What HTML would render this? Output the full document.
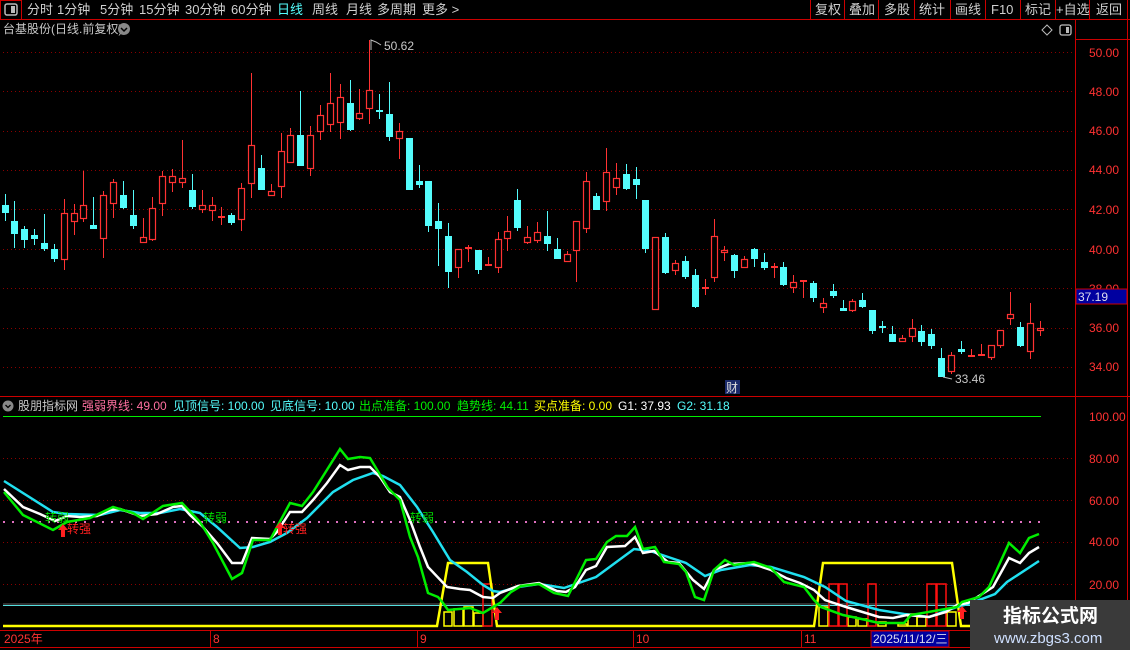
<!DOCTYPE html>
<html><head><meta charset="utf-8">
<style>
html,body{margin:0;padding:0;background:#000;width:1130px;height:650px;overflow:hidden;font-family:"Liberation Sans","Noto Sans CJK SC",sans-serif;}
svg{position:absolute;left:0;top:0}
text{font-family:"Liberation Sans","Noto Sans CJK SC",sans-serif}
</style></head><body>
<svg id="s" width="1130" height="650" viewBox="0 0 1130 650" xmlns="http://www.w3.org/2000/svg">
<rect width="1130" height="650" fill="#000"/>
<rect x="0.5" y="0.5" width="21" height="19" fill="none" stroke="#c00" />
<rect x="5" y="4" width="12" height="11" rx="2" fill="none" stroke="#bbb" stroke-width="1.5"/>
<rect x="11" y="6" width="4" height="7" fill="#bbb"/>
<line x1="0" y1="19.5" x2="1130" y2="19.5" stroke="#c00"/>
<g font-size="13" fill="#d0d0d0">
<text x="27" y="14">分时</text><text x="57" y="14">1分钟</text><text x="100" y="14">5分钟</text>
<text x="139" y="14">15分钟</text><text x="185" y="14">30分钟</text><text x="231" y="14">60分钟</text>
<text x="277" y="14" fill="#54fcfc">日线</text><text x="312" y="14">周线</text><text x="346" y="14">月线</text>
<text x="377" y="14">多周期</text><text x="422" y="14">更多 &gt;</text>
</g>
<g stroke="#c00" fill="none">
<line x1="810.5" y1="0" x2="810.5" y2="19"/><line x1="844.5" y1="0" x2="844.5" y2="19"/>
<line x1="878.5" y1="0" x2="878.5" y2="19"/><line x1="914.5" y1="0" x2="914.5" y2="19"/>
<line x1="950.5" y1="0" x2="950.5" y2="19"/><line x1="985.5" y1="0" x2="985.5" y2="19"/>
<line x1="1020.5" y1="0" x2="1020.5" y2="19"/><line x1="1055.5" y1="0" x2="1055.5" y2="19"/>
<line x1="1089.5" y1="0" x2="1089.5" y2="19"/><line x1="1127.5" y1="0" x2="1127.5" y2="19"/>
</g>
<g font-size="13" fill="#d0d0d0">
<text x="815" y="14">复权</text><text x="849" y="14">叠加</text><text x="884" y="14">多股</text>
<text x="919" y="14">统计</text><text x="955" y="14">画线</text><text x="991" y="14">F10</text>
<text x="1025" y="14">标记</text><text x="1056" y="14">+自选</text><text x="1096" y="14">返回</text>
</g>
<text x="3" y="33" font-size="12" fill="#c8c8c8">台基股份(日线.前复权)</text>
<circle cx="124" cy="29" r="6" fill="#888"/>
<path d="M121 28 L124 31 L127 28" stroke="#000" stroke-width="1.5" fill="none"/>
<path d="M1047 25 L1052 30 L1047 35 L1042 30 Z" stroke="#bbb" fill="none"/>
<rect x="1060" y="25" width="11" height="10" rx="2" fill="none" stroke="#bbb" stroke-width="1.3"/>
<rect x="1066" y="27" width="3" height="6" fill="#bbb"/>
<line x1="1075.5" y1="20" x2="1075.5" y2="650" stroke="#c00"/>
<line x1="1127.5" y1="20" x2="1127.5" y2="650" stroke="#c00"/>
<line x1="1075" y1="39.5" x2="1130" y2="39.5" stroke="#c00"/>
<line x1="0" y1="396.5" x2="1130" y2="396.5" stroke="#c00"/>
<line x1="0" y1="630.5" x2="1075" y2="630.5" stroke="#c00"/>
<line x1="0" y1="647.5" x2="1075" y2="647.5" stroke="#c00"/>
<g id="grid" stroke="#8a0000" stroke-dasharray="1 3"></g>
<g font-size="12" fill="#ff3232">
<text x="1089" y="57">50.00</text><text x="1089" y="96">48.00</text><text x="1089" y="135">46.00</text>
<text x="1089" y="174">44.00</text><text x="1089" y="214">42.00</text><text x="1089" y="254">40.00</text>
<text x="1089" y="293">38.00</text><text x="1089" y="332">36.00</text><text x="1089" y="371">34.00</text>
<text x="1089" y="421">100.00</text><text x="1089" y="463">80.00</text><text x="1089" y="505">60.00</text>
<text x="1089" y="546">40.00</text><text x="1089" y="589">20.00</text>
</g>
<rect x="1076" y="289" width="51" height="15" fill="#0000a0" stroke="#c00"/>
<text x="1078" y="301" font-size="12" fill="#dde">37.19</text>
<g id="candles"></g>
<path d="M371 50 L371 40 L376 42 L381 45" stroke="#bbb" fill="none"/>
<text x="384" y="50" font-size="12" fill="#c8c8c8">50.62</text>
<path d="M943 377 L952 379" stroke="#bbb" fill="none"/>
<text x="955" y="383" font-size="12" fill="#c8c8c8">33.46</text>
<rect x="725" y="380" width="15" height="14" fill="#1a2a6a"/>
<text x="726" y="392" font-size="12" fill="#ddd">财</text>
<circle cx="8" cy="406" r="5.5" fill="#888"/>
<path d="M5.5 405 L8 407.5 L10.5 405" stroke="#000" stroke-width="1.3" fill="none"/>
<g font-size="12">
<text x="18" y="410" fill="#c8c8c8">股朋指标网</text>
<text x="82" y="410" fill="#ff70a0">强弱界线: 49.00</text>
<text x="173" y="410" fill="#54fcfc">见顶信号: 100.00</text>
<text x="270" y="410" fill="#54fcfc">见底信号: 10.00</text>
<text x="359" y="410" fill="#00ee00">出点准备: 100.00</text>
<text x="457" y="410" fill="#00ee00">趋势线: 44.11</text>
<text x="534" y="410" fill="#ffff00">买点准备: 0.00</text>
<text x="618" y="410" fill="#fff">G1: 37.93</text>
<text x="677" y="410" fill="#54fcfc">G2: 31.18</text>
</g>
<line x1="3" y1="416.5" x2="1041" y2="416.5" stroke="#00ee00"/>
<line x1="3" y1="522" x2="1041" y2="522" stroke="#e070c0" stroke-width="2" stroke-dasharray="2 7"/>
<line x1="3" y1="605.5" x2="1075" y2="605.5" stroke="#54e0e0"/>
<line x1="3" y1="604" x2="1075" y2="604" stroke="#bbb" stroke-width="0.6"/>
<g fill="none" stroke-width="1.5">
<g stroke="#ffff00">
<rect x="444" y="612" width="8" height="14"/><rect x="454" y="609" width="9" height="17"/>
<rect x="464" y="607" width="9" height="19"/><rect x="474" y="613" width="9" height="13"/>
<rect x="819" y="607" width="9" height="19"/><rect x="848" y="617" width="8" height="9"/>
<rect x="858" y="619" width="9" height="7"/><rect x="878" y="622" width="8" height="4"/>
<rect x="898" y="624" width="9" height="2"/><rect x="908" y="614" width="9" height="12"/>
<rect x="917" y="617" width="9" height="9"/><rect x="947" y="612" width="9" height="14"/>
</g>
<g stroke="#ff1010">
<rect x="483" y="584" width="9" height="42"/><rect x="829" y="584" width="9" height="42"/>
<rect x="839" y="584" width="8" height="42"/><rect x="868" y="584" width="8" height="42"/>
<rect x="927" y="584" width="9" height="42"/><rect x="937" y="584" width="9" height="42"/>
</g>
</g>
<polyline fill="none" stroke="#ffff00" stroke-width="2.5" points="3,626 437,626 448,563 488,563 497,626 814,626 823,563 952,563 961,626 1041,626"/>
<polyline fill="none" stroke="#20e0f0" stroke-width="2.5" points="4,481 53,512 67,514 100,515 120,510 140,513 160,513 180,509 200,513 217,527 240,548 253,547 270,542 287,533 307,518 333,492 353,480 373,473 383,476 400,485 417,507 433,532 450,560 467,572 483,585 493,591 500,592 518,587 539,584 564,588 596,577 634,549 650,551 686,563 705,576 721,570 750,565 771,567 804,577 825,587 846,601 879,610 904,614 929,617 957,607 971,603 995,594 1007,582 1039,561"/>
<polyline fill="none" stroke="#ffffff" stroke-width="2.5" points="4,489 23,507 40,514 55,521 67,516 80,517 97,516 110,510 120,509 140,516 157,514 173,507 182,506 190,515 203,527 217,543 232,563 242,563 252,538 270,539 277,532 290,512 302,512 313,500 327,483 340,465 348,470 360,467 370,467 380,477 390,492 400,497 410,520 420,547 428,567 447,587 460,589 470,590 483,597 493,598 500,593 518,586 539,583 557,591 566,592 575,587 586,570 596,566 607,547 625,546 635,537 643,553 654,551 668,562 679,563 693,580 704,589 714,570 729,564 750,563 771,570 786,578 800,583 814,590 825,600 846,607 879,617 893,618 907,615 929,617 946,612 957,605 968,603 993,587 1009,558 1020,563 1029,553 1039,547"/>
<polyline fill="none" stroke="#00ee00" stroke-width="2.5" points="4,492 23,515 53,530 67,522 90,518 113,507 133,513 143,519 163,506 182,503 200,522 213,543 232,579 242,573 253,540 270,540 290,503 302,506 313,492 325,473 340,449 348,459 360,457 370,458 388,488 400,500 410,537 418,557 428,593 438,597 443,603 448,610 470,608 483,613 493,607 500,603 511,592 521,586 539,584 554,593 568,596 586,560 596,559 607,542 616,536 627,536 635,527 643,549 655,547 664,562 679,564 686,572 695,597 704,600 714,570 725,560 734,565 754,562 771,568 784,582 804,587 814,600 821,607 843,615 857,618 879,623 904,623 911,615 957,607 962,602 979,597 989,587 1009,543 1020,553 1029,538 1039,534"/>
<g fill="#ff2020">
<path d="M63 524 L68 530 L65 530 L65 537 L61 537 L61 530 L58 530Z"/>
<path d="M280 522 L285 528 L282 528 L282 535 L278 535 L278 528 L275 528Z"/>
<path d="M497 607 L502 613 L499 613 L499 620 L495 620 L495 613 L492 613Z"/>
<path d="M962 606 L967 612 L964 612 L964 619 L960 619 L960 612 L957 612Z"/>
</g>
<g font-size="12">
<text x="45" y="522" fill="#00dd00">转弱</text>
<text x="67" y="533" fill="#ff2020">转强</text>
<text x="203" y="522" fill="#00dd00">转弱</text>
<text x="283" y="533" fill="#ff2020">转强</text>
<text x="410" y="522" fill="#00dd00">转弱</text>
</g>
<g stroke="#c00">
<line x1="210.5" y1="631" x2="210.5" y2="647"/><line x1="417.5" y1="631" x2="417.5" y2="647"/>
<line x1="633.5" y1="631" x2="633.5" y2="647"/><line x1="801.5" y1="631" x2="801.5" y2="647"/>
</g>
<g font-size="12" fill="#ff3232">
<text x="4" y="643">2025年</text><text x="213" y="643">8</text><text x="420" y="643">9</text>
<text x="636" y="643">10</text><text x="804" y="643">11</text>
</g>
<rect x="871" y="631" width="78" height="16" fill="#0000a0" stroke="#c00"/>
<text x="873" y="643" font-size="12" fill="#dde">2025/11/12/三</text>
<rect x="970" y="600" width="160" height="50" fill="#3a3a3a"/>
<text x="1003" y="622" font-size="19" font-weight="bold" fill="#fff">指标公式网</text>
<text x="994" y="643" font-size="15" fill="#cfe0ff">www.zbgs3.com</text>
</svg>
<script>
var NS="http://www.w3.org/2000/svg",g=document.getElementById('grid'),c=document.getElementById('candles');
function el(p,t,a){var e=document.createElementNS(NS,t);for(var k in a)e.setAttribute(k,a[k]);p.appendChild(e);return e;}
[52,91,131,170,209,249,288,328,367,458,500,542,584].forEach(function(y){el(g,'line',{x1:3,x2:1075,y1:y+.5,y2:y+.5});});
var d="c205 213 194 221|c221 234 201 248|c229 240 226 248|c235 239 229 245|c243 249 214 251|c249 259 244 262|r213 260 199 270|r213 222 204 235|r205 219 171 222|c225 229 197 229|r195 239 191 258|r182 204 179 218|c195 208 181 209|c215 226 190 229|r237 243 218 243|r208 240 197 241|r176 204 171 216|r176 183 169 192|r178 183 140 188|c190 207 174 209|r205 210 190 213|r205 211 197 221|r217 217 207 225|c215 223 213 225|r188 220 183 231|r145 184 73 198|c168 190 155 190|r191 196 184 196|r151 187 133 198|r135 163 128 163|c135 166 91 166|r135 169 126 176|r115 132 105 140|r103 125 73 132|r97 123 84 139|c103 130 80 131|r113 119 89 120|r90 109 40 124|c111 112 94 119|c114 137 82 141|r131 139 123 159|c138 190 138 190|c181 185 165 188|c181 226 181 232|c221 229 203 266|c236 272 223 288|r249 268 249 278|r248 248 245 262|c250 270 250 274|r265 266 257 266|r239 268 232 273|r231 239 216 251|c200 228 189 231|r237 243 226 244|r232 241 222 243|c236 244 211 251|c249 259 238 259|r254 262 251 262|r221 251 221 282|r181 229 172 233|c196 210 193 210|r172 202 148 211|r178 188 163 195|c174 189 164 190|c179 185 167 199|c200 249 200 253|r237 310 237 310|c237 273 233 274|r263 271 260 275|c261 277 256 279|c275 307 269 308|r288 288 279 295|r236 278 219 282|r250 253 246 261|c255 271 254 278|r259 268 256 268|c249 259 248 267|c262 268 253 270|r267 267 263 278|c267 285 262 286|r282 288 275 293|r281 281 281 298|c283 298 281 302|r303 308 298 313|c291 296 284 298|c308 311 300 311|r301 311 299 312|c300 307 293 308|c310 331 310 334|c327 327 321 333|c334 342 326 342|r338 342 335 342|r328 337 319 342|c331 342 325 346|c334 346 329 349|c358 377 348 377|r355 372 352 374|c349 352 341 354|r356 356 349 357|r355 355 344 356|r345 358 345 360|r330 346 330 348|r314 319 292 325|c327 346 322 347|r323 352 303 359|r328 331 321 336".split('|');
d.forEach(function(s,i){var col=s[0]=='r'?'#ff3232':'#54fcfc';var v=s.slice(1).split(' ').map(Number);
var x=Math.round(4.5+i*9.86)+.5;var t=v[0],b=v[1],h=v[2],l=v[3];
el(c,'line',{x1:x,x2:x,y1:h,y2:l,stroke:col,'stroke-width':1});
if(b-t<2){el(c,'rect',{x:x-3.5,y:t-1,width:7,height:2,fill:col});}
else if(s[0]=='r'){el(c,'rect',{x:x-3,y:t+.5,width:6,height:b-t-1,fill:'#000',stroke:col,'stroke-width':1.2});}
else{el(c,'rect',{x:x-3.5,y:t,width:7,height:b-t,fill:col});}
});
</script>
</body></html>
